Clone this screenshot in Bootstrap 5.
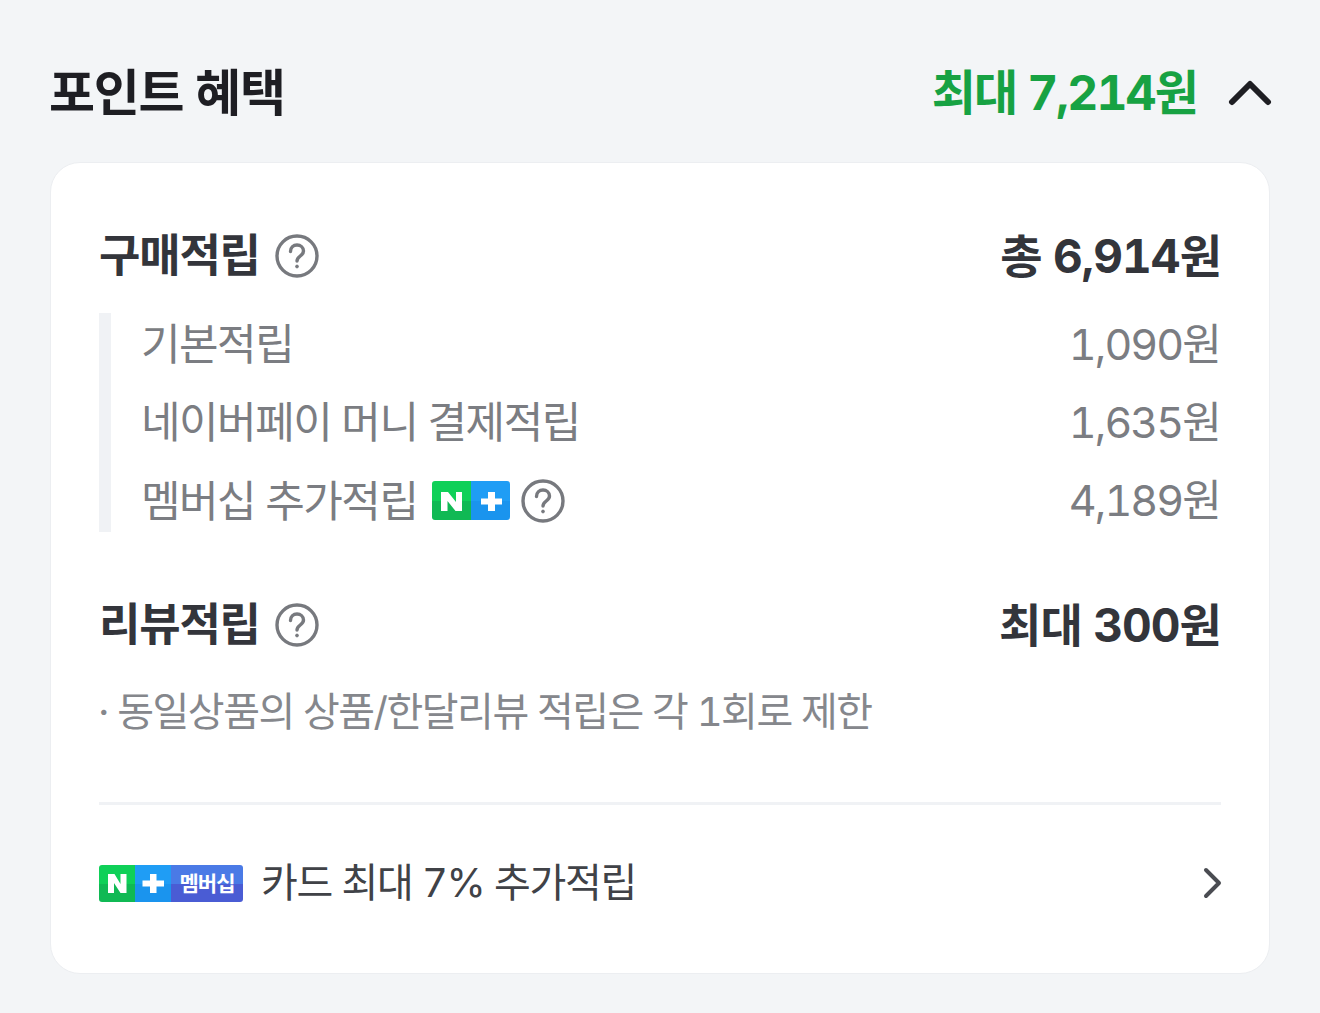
<!DOCTYPE html>
<html lang="ko">
<head>
<meta charset="UTF-8" />
<meta name="viewport" content="width=device-width, initial-scale=1" />
<title>포인트 혜택</title>
<link href="https://cdn.jsdelivr.net/npm/bootstrap@5.3.0/dist/css/bootstrap.min.css" rel="stylesheet">
<style>
  body { background: #f3f5f7; font-family: "Inter", "Noto Sans CJK KR", sans-serif; font-variant-numeric: tabular-nums; width: 1320px; height: 1013px; overflow: hidden; }
  .page-wrap { padding: 62px 50px 0; }
  .head-title { font-size: 50px; line-height: 60px; font-weight: 700; color: #1e1e23; letter-spacing: -1.3px; margin-left: -1px; }
  .head-sum { font-size: 48px; line-height: 62px; font-weight: 700; color: #17a243; letter-spacing: -1.9px; }
  .head-arrow { width: 46px; height: 28px; margin: 0 -3px 0 30px; }
  .benefit-box { margin-top: 38px; height: 812px; background: #fff; border: 1px solid #eceef1; border-radius: 30px; padding: 65px 48px 0; }
  .sec-title, .sec-sum { font-size: 45px; line-height: 56px; font-weight: 700; color: #33353b; letter-spacing: -1.2px; }
  .sec-sum { font-size: 46px; letter-spacing: -.95px; }
  .help-ico { width: 44px; height: 44px; flex: none; }
  .title-gap { gap: 15px; }
  .sub-list { margin-top: 29px; border-left: 12px solid #f0f2f5; padding-left: 30px; height: 219px; }
  .sub-row { height: 78px; font-size: 43px; color: #7b7d82; letter-spacing: -1.5px; line-height: 62px; }
  .sub-row:last-child { height: 63px; }
  .sub-sum { letter-spacing: -1.9px; margin-right: 1px; }
  .review-head { margin-top: 65px; }
  .review-note { margin-top: 33px; font-size: 40px; line-height: 52px; color: #85878c; letter-spacing: -1.5px; margin-left: -1px; }
  .box-line { margin-top: 64px; height: 3px; background: #f0f2f5; }
  .card-link-row { margin-top: 50px; font-size: 40px; line-height: 56px; color: #404247; letter-spacing: -1.3px; }
  .link-gap { gap: 18px; }
  .link-arrow { margin-right: -2px; }
  .np-small { width: 78px; height: 39px; margin-left: 15px; margin-right: 11px; }
  .np-wide { width: 144px; height: 37px; }
</style>
</head>
<body>
<div class="page-wrap">
  <div class="d-flex justify-content-between align-items-center">
    <div class="head-title">포인트 혜택</div>
    <div class="d-flex align-items-center">
      <span class="head-sum">최대 7,214원</span>
      <svg class="head-arrow" viewBox="0 0 46 28" fill="none" stroke="#1e1e23" stroke-width="6" stroke-linecap="round" stroke-linejoin="round"><path d="M5 23 L23 5 L41 23"/></svg>
    </div>
  </div>
  <div class="benefit-box">
    <div class="d-flex justify-content-between align-items-center">
      <div class="d-flex align-items-center title-gap">
        <span class="sec-title">구매적립</span>
        <svg class="help-ico" viewBox="0 0 44 44" fill="none" stroke="#77797e" stroke-width="3.4"><circle cx="22" cy="22" r="20"/><path d="M15.5 17.5c0-4 3-6.5 6.5-6.5s6.500 2.500 6.500 6c0 5-6.500 5-6.500 10" stroke-linecap="round"/><circle cx="22" cy="32.500" r="1.400" fill="#77797e" stroke-width="1"/></svg>
      </div>
      <span class="sec-sum">총 6,914원</span>
    </div>
    <div class="sub-list">
      <div class="sub-row d-flex justify-content-between"><span>기본적립</span><span class="sub-sum">1,090원</span></div>
      <div class="sub-row d-flex justify-content-between"><span>네이버페이 머니 결제적립</span><span class="sub-sum">1,635원</span></div>
      <div class="sub-row d-flex justify-content-between">
        <span class="d-flex align-items-center">멤버십 추가적립
          <svg class="np-small" viewBox="0 0 78 39"><defs><clipPath id="npa"><rect width="78" height="39" rx="3"/></clipPath></defs><g clip-path="url(#npa)"><rect width="39" height="20" fill="#0fd058"/><rect y="20" width="39" height="19" fill="#10b954"/><rect x="39" width="39" height="20" fill="#1f9df5"/><rect x="39" y="20" width="39" height="19" fill="#1a94ee"/></g><path d="M9 30V11h7l8 10V11h6v19h-6.500l-8-10v10z" fill="#fff"/><path d="M56 11h7v6.500h7v6h-7V30h-7v-6.500h-7v-6h7z" fill="#fff"/></svg>
          <svg class="help-ico" viewBox="0 0 44 44" fill="none" stroke="#77797e" stroke-width="3.4"><circle cx="22" cy="22" r="20"/><path d="M15.5 17.5c0-4 3-6.5 6.5-6.5s6.500 2.500 6.500 6c0 5-6.500 5-6.500 10" stroke-linecap="round"/><circle cx="22" cy="32.500" r="1.400" fill="#77797e" stroke-width="1"/></svg>
        </span>
        <span class="sub-sum">4,189원</span>
      </div>
    </div>
    <div class="review-head d-flex justify-content-between align-items-center">
      <div class="d-flex align-items-center title-gap">
        <span class="sec-title">리뷰적립</span>
        <svg class="help-ico" viewBox="0 0 44 44" fill="none" stroke="#77797e" stroke-width="3.4"><circle cx="22" cy="22" r="20"/><path d="M15.5 17.5c0-4 3-6.5 6.5-6.5s6.500 2.500 6.500 6c0 5-6.500 5-6.500 10" stroke-linecap="round"/><circle cx="22" cy="32.500" r="1.400" fill="#77797e" stroke-width="1"/></svg>
      </div>
      <span class="sec-sum">최대 300원</span>
    </div>
    <div class="review-note">· 동일상품의 상품/한달리뷰 적립은 각 1회로 제한</div>
    <div class="box-line"></div>
    <div class="card-link-row d-flex justify-content-between align-items-center">
      <span class="d-flex align-items-center link-gap">
        <svg class="np-wide" viewBox="0 0 144 37"><defs><clipPath id="npb"><rect width="144" height="37" rx="3"/></clipPath></defs><g clip-path="url(#npb)"><rect width="36" height="19" fill="#0fd058"/><rect y="19" width="36" height="18" fill="#10b954"/><rect x="36" width="36" height="19" fill="#1f9df5"/><rect x="36" y="19" width="36" height="18" fill="#1a94ee"/><rect x="72" width="72" height="19" fill="#4a7ae6"/><rect x="72" y="19" width="72" height="18" fill="#4a5cd4"/></g><path d="M9 28V9h6.500l6 10V9h6v19h-6l-6.500-10v10z" fill="#fff"/><path d="M51 9h6.500v6.500H65v6h-7.500V28H51v-6.500h-7.500v-6H51z" fill="#fff"/><text x="108" y="26" text-anchor="middle" font-family="Noto Sans CJK KR, sans-serif" font-size="21" font-weight="700" fill="#fff" letter-spacing="-1">멤버십</text></svg>
        <span>카드 최대 7% 추가적립</span>
      </span>
      <svg class="link-arrow" width="22" height="34" viewBox="0 0 22 34" fill="none" stroke="#4a4c52" stroke-width="4" stroke-linecap="round" stroke-linejoin="round"><path d="M5 4 L18 17 L5 30"/></svg>
    </div>
  </div>
</div>
<script src="https://cdn.jsdelivr.net/npm/bootstrap@5.3.0/dist/js/bootstrap.bundle.min.js"></script>
</body>
</html>
